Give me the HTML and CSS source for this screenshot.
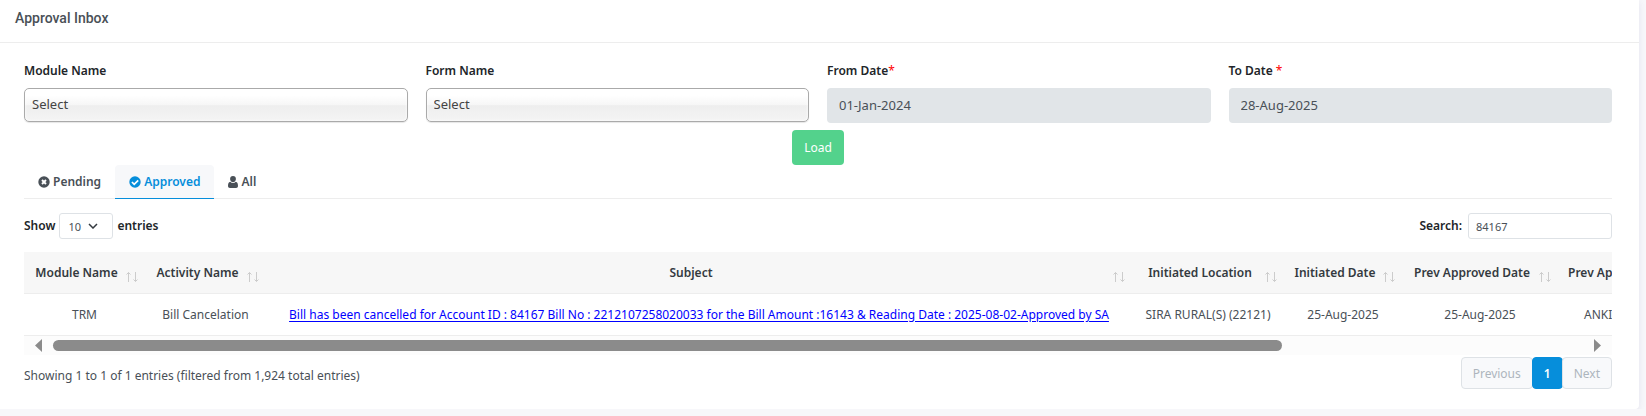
FILE: index.html
```html
<!DOCTYPE html>
<html lang="en">
<head>
    <meta charset="UTF-8">
    <meta name="viewport" content="width=device-width, initial-scale=1.0">
    <title>Approval Inbox</title>
    <link rel="stylesheet" href="styles.css">
</head>
<body>

<!-- Sort arrows used by every table heading -->
<svg class="sprite" aria-hidden="true">
    <symbol id="sort" viewBox="0 0 12 12">
        <path d="M2.5 11V1.500M.5 3.500l2-2 2 2M9.500 1v9.500M7.500 8.500l2 2 2-2" fill="none" stroke="currentColor"/>
    </symbol>
</svg>

<div class="card">
    <div class="card-header">
        <h1 class="card-title">Approval Inbox</h1>
    </div>

    <div class="card-body">
        <form class="filters" onsubmit="return false">
            <div class="field">
                <label for="moduleName">Module Name</label>
                <select id="moduleName" class="chosen">
                    <option>Select</option>
                </select>
            </div>
            <div class="field">
                <label for="formName">Form Name</label>
                <select id="formName" class="chosen">
                    <option>Select</option>
                </select>
            </div>
            <div class="field">
                <label for="fromDate">From Date<span class="required">*</span></label>
                <input type="text" id="fromDate" class="form-control" value="01-Jan-2024" readonly>
            </div>
            <div class="field">
                <label for="toDate">To Date <span class="required">*</span></label>
                <input type="text" id="toDate" class="form-control" value="28-Aug-2025" readonly>
            </div>
        </form>

        <div class="actions">
            <button type="button" class="btn-load">Load</button>
        </div>

        <nav class="tabs">
            <a href="#pending" class="tab">
                <svg class="icon" viewBox="0 0 12 12"><circle cx="6" cy="6" r="5.7" fill="currentColor"/><path d="M4 4l4 4M8 4l-4 4" stroke="#fff" stroke-width="1.9"/></svg>
                Pending
            </a>
            <a href="#approved" class="tab active">
                <svg class="icon" viewBox="0 0 12 12"><circle cx="6" cy="6" r="5.7" fill="currentColor"/><path d="M2.9 6l2.3 2.3 4-4" fill="none" stroke="#fff" stroke-width="1.7"/></svg>
                Approved
            </a>
            <a href="#all" class="tab">
                <svg class="icon icon-user" viewBox="0 0 10 12"><path d="M5 0a2.9 3 0 0 1 2.9 3.1C7.900 5 6.600 6.300 5 6.300S2.100 5 2.100 3.100A2.900 3 0 0 1 5 0zM2.300 5.700C3 6.600 4 7.100 5 7.100s2-.5 2.700-1.400C9.400 5.900 10 7.700 10 10c0 1.200-.8 2-1.900 2H1.900C.8 12 0 11.200 0 10c0-2.300.6-4.100 2.300-4.300z" fill="currentColor"/></svg>
                All
            </a>
        </nav>

        <div class="table-tools">
            <label class="length">
                Show
                <select class="length-select">
                    <option>10</option>
                </select>
                entries
            </label>
            <label class="search">
                Search:
                <input type="text" class="search-input" value="84167">
            </label>
        </div>

        <div class="table-wrap">
            <table class="inbox">
                <colgroup>
                    <col class="col-module">
                    <col class="col-module">
                    <col class="col-subject">
                    <col class="col-location">
                    <col class="col-date">
                    <col class="col-prev-date">
                    <col class="col-prev-by">
                </colgroup>
                <thead>
                    <tr>
                        <th>Module Name<svg class="sort"><use href="#sort"/></svg></th>
                        <th>Activity Name<svg class="sort"><use href="#sort"/></svg></th>
                        <th>Subject<svg class="sort"><use href="#sort"/></svg></th>
                        <th>Initiated Location<svg class="sort"><use href="#sort"/></svg></th>
                        <th>Initiated Date<svg class="sort"><use href="#sort"/></svg></th>
                        <th>Prev Approved Date<svg class="sort"><use href="#sort"/></svg></th>
                        <th class="start">Prev Ap</th>
                    </tr>
                </thead>
                <tbody>
                    <tr>
                        <td>TRM</td>
                        <td>Bill Cancelation</td>
                        <td><a href="#bill">Bill has been cancelled for Account ID : 84167 Bill No : 2212107258020033 for the Bill Amount :16143 &amp; Reading Date : 2025-08-02-Approved by SA</a></td>
                        <td>SIRA RURAL(S) (22121)</td>
                        <td>25-Aug-2025</td>
                        <td>25-Aug-2025</td>
                        <td class="name">ANKI</td>
                    </tr>
                </tbody>
            </table>
        </div>
        <div class="scrollbar">
            <svg class="scroll-arrow" viewBox="0 0 7 13"><path d="M7 0v13L0 6.500z"/></svg>
            <div class="scroll-track"><div class="scroll-thumb"></div></div>
            <svg class="scroll-arrow" viewBox="0 0 7 13"><path d="M0 0v13l7-6.500z"/></svg>
        </div>

        <div class="table-footer">
            <div class="info">Showing 1 to 1 of 1 entries (filtered from 1,924 total entries)</div>
            <div class="pagination">
                <button type="button" class="page" disabled>Previous</button>
                <button type="button" class="page current">1</button>
                <button type="button" class="page" disabled>Next</button>
            </div>
        </div>
    </div>
</div>

</body>
</html>
```
FILE: styles.css
```css
* {
    box-sizing: border-box;
}
body {
    margin: 0;
    padding-right: 7px;
    background-color: #f7f7fa;
    color: #495057;
    font-family: "Noto Sans", sans-serif;
    font-size: 12px;
    line-height: 20px;
}
input,
select,
button {
    font-family: inherit;
    font-size: 12px;
    color: #495057;
}
label {
    color: #212529;
    font-weight: 600;
}
.sprite {
    display: none;
}
.card {
    background-color: #fff;
    border-radius: 0 0 4px 0;
    box-shadow: 0 2px 6px rgba(80, 80, 160, 0.12);
}
.card-header {
    padding: 8px 15px 14px;
    border-bottom: 1px solid #ededed;
}
.card-title {
    margin: 0;
    font-family: Roboto, sans-serif;
    font-size: 14px;
    font-weight: 500;
    line-height: 20px;
}
.card-body {
    padding: 18px 27px 20px 24px;
}

/* Filters */
.filters {
    display: grid;
    grid-template-columns: repeat(4, 1fr);
    gap: 18px;
}
.field label {
    display: block;
    margin-bottom: 7px;
}
.required {
    color: #f00;
    font-weight: 400;
}
.chosen {
    display: block;
    width: 100%;
    height: 34px;
    padding: 0 4px 2px 7px;
    border: 1px solid #aaa;
    border-radius: 5px;
    appearance: none;
    background: linear-gradient(#fff 20%, #f6f6f6 50%, #eee 52%, #f4f4f4 100%);
    box-shadow: 0 0 3px #fff inset, 0 1px 1px rgba(0, 0, 0, 0.1);
    color: #444;
    font-size: 13px;
}
.form-control {
    display: block;
    width: 100%;
    height: 35px;
    padding: 0 12px 1px;
    border: none;
    border-radius: 4px;
    background-color: #e1e5e8;
    font-size: 13px;
}
.actions {
    margin-top: 7px;
    text-align: center;
}
.btn-load {
    display: inline-block;
    height: 35px;
    padding: 0 12px;
    border: none;
    border-radius: 4px;
    background-color: #53d28c;
    color: #fff;
    cursor: pointer;
    vertical-align: top;
}

/* Tabs */
.tabs {
    display: flex;
    border-bottom: 1px solid #ededed;
}
.tab {
    display: flex;
    align-items: center;
    gap: 3px;
    height: 34px;
    margin-bottom: -1px;
    padding: 0 14px;
    border-bottom: 1px solid transparent;
    border-radius: 4px 4px 0 0;
    color: #495057;
    font-weight: 600;
    text-decoration: none;
}
.tab.active {
    border-bottom-color: #068edb;
    background-color: #f7f8fa;
    color: #068edb;
}
.icon {
    width: 12px;
    height: 12px;
}
.icon-user {
    width: 10px;
}

/* Table */
.table-tools {
    display: flex;
    justify-content: space-between;
    margin: 14px 0 13px;
}
.length,
.search {
    display: flex;
    align-items: center;
    gap: 4px;
}
.search {
    gap: 6px;
}
.length-select,
.search-input {
    height: 26px;
    padding: 0 7px;
    border: 1px solid #dee2e6;
    border-radius: 3px;
    background-color: #fff;
    font-size: 11px;
}
.length-select {
    width: 54px;
    padding-left: 8px;
    appearance: none;
    background: #fff url("data:image/svg+xml,%3Csvg xmlns='http://www.w3.org/2000/svg' width='10' height='6'%3E%3Cpath d='M1 1l4 4 4-4' fill='none' stroke='%23343a40' stroke-width='1.5'/%3E%3C/svg%3E") no-repeat 28px center;
}
.search-input {
    width: 144px;
}
.table-wrap {
    overflow: hidden;
}
.inbox {
    width: 1978px;
    border-collapse: separate;
    border-spacing: 0;
    table-layout: fixed;
    text-align: center;
    white-space: nowrap;
}
.col-module {
    width: 121px;
}
.col-subject {
    width: 866px;
}
.col-location {
    width: 152px;
}
.col-date {
    width: 118px;
}
.col-prev-date {
    width: 156px;
}
.inbox th,
.inbox td {
    height: 42px;
    padding: 0;
    border-bottom: 1px solid #ededed;
}
.inbox th {
    position: relative;
    padding-right: 16px;
    background-color: #f7f7f7;
    color: #343a40;
    font-weight: 600;
}
.inbox a {
    color: #00f;
    text-underline-offset: 2px;
}
.sort {
    position: absolute;
    right: 7px;
    bottom: 10px;
    width: 12px;
    height: 12px;
    color: #ccc;
}
.inbox .start {
    padding-left: 10px;
    text-align: left;
}
.inbox .name {
    padding-left: 26px;
    text-align: left;
}
.scrollbar {
    display: flex;
    align-items: center;
    gap: 11px;
    height: 19px;
    padding: 0 11px;
    background-color: #fcfcfc;
}
.scroll-arrow {
    width: 7px;
    height: 13px;
    fill: #8b8b8b;
}
.scroll-track {
    flex: 1;
}
.scroll-thumb {
    width: 80.3%;
    height: 11px;
    border-radius: 6px;
    background-color: #8b8b8b;
}

/* Footer */
.table-footer {
    display: flex;
    justify-content: space-between;
    align-items: flex-start;
    margin-top: 2px;
}
.info {
    padding-top: 9px;
}
.pagination {
    display: flex;
}
.page {
    height: 32px;
    padding: 0 11px;
    border: 1px solid #dee2e6;
    border-radius: 4px;
    background-color: #f8f9fb;
    color: #adb5bd;
}
.page.current {
    margin: 0 -1px;
    border-color: #068edb;
    background-color: #068edb;
    color: #fff;
    font-weight: 600;
}
```
